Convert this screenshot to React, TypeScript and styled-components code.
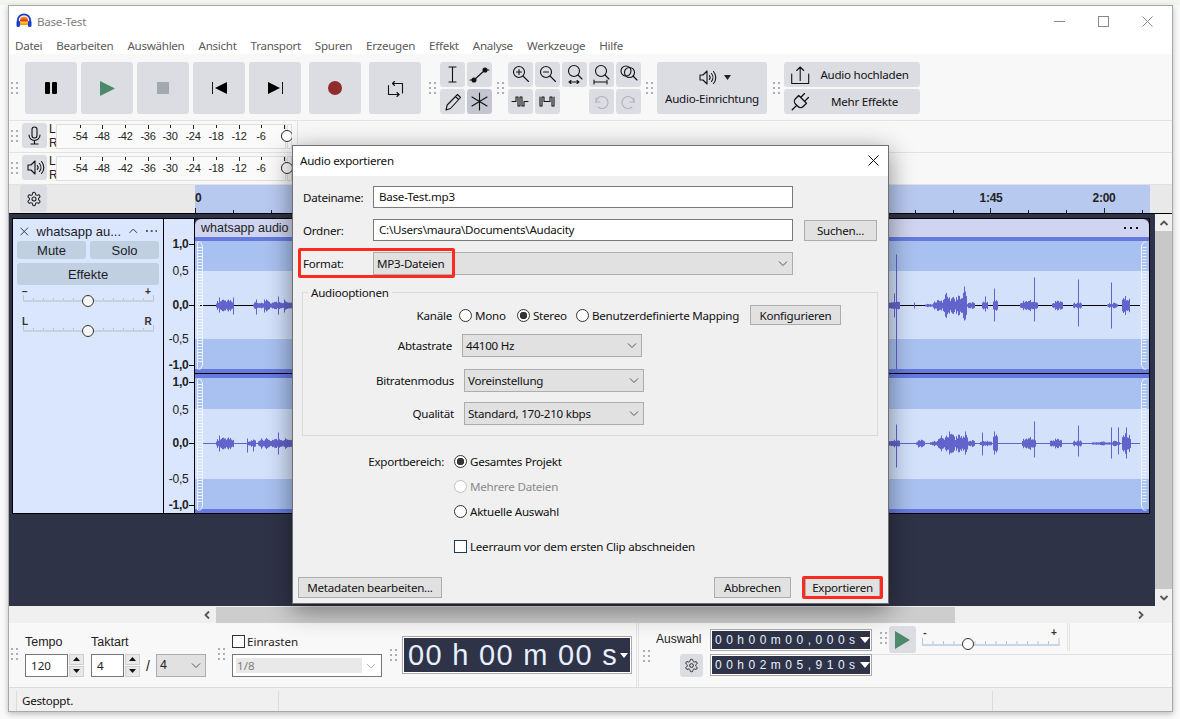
import React from 'react';
import styled, { createGlobalStyle } from 'styled-components';

const UI = `"Noto Sans", sans-serif`;
const AR = `"Liberation Sans", Arial, sans-serif`;

const GlobalStyle = createGlobalStyle`
  html, body { margin: 0; padding: 0; background: #fafafa; }
  * { box-sizing: border-box; }
`;

const Page = styled.div`
  width: 1180px;
  height: 719px;
  padding: 5px 0 0 8px;
  background: linear-gradient(#f3f5ef 5px, #fafafa 5px);
  overflow: hidden;
`;

const Window = styled.div`
  position: relative;
  width: 1165px;
  height: 707px;
  border: 1px solid #a8a8a8;
  background: #f8f8f8;
  box-shadow: 0 2px 6px rgba(0, 0, 0, 0.25);
  display: flex;
  flex-direction: column;
  font-family: ${UI};
  font-size: 11.6px;
  letter-spacing: -0.25px;
  color: #111;
`;

const TitleBar = styled.div`
  height: 30px;
  background: #fff;
  display: flex;
  align-items: center;
  padding: 0 3px 0 7px;
  color: #808080;
  gap: 5px;
`;

const WinControls = styled.div`
  margin-left: auto;
  display: flex;
`;

const WinButton = styled.div`
  width: 44px;
  height: 30px;
  display: flex;
  align-items: center;
  justify-content: center;
`;

const MenuBar = styled.div`
  height: 18px;
  background: #fff;
  display: flex;
  align-items: center;
  gap: 14px;
  padding-left: 6px;
  color: #5a5a5a;
  letter-spacing: -0.28px;
`;

const Dock = styled.div`
  height: 67px;
  display: flex;
  align-items: flex-start;
  padding: 8px 0 0 2px;
  border-bottom: 1px solid #e2e2e2;
`;

const GripMark = styled.svg<{ $l?: number; $r?: number; $t?: number }>`
  flex: none;
  width: 7px;
  height: 12px;
  margin: ${(p) => p.$t ?? 20}px ${(p) => p.$r ?? 4}px 0 ${(p) => p.$l ?? 0}px;
`;

const Grip = (props: { $l?: number; $r?: number; $t?: number }) => (
  <GripMark {...props} viewBox="0 0 7 12">
    {[0, 5, 10].map((y) =>
      [0, 5].map((x) => <rect key={`${x}-${y}`} x={x} y={y} width="2" height="2" fill="#aeaeba" />),
    )}
  </GripMark>
);

const TransportRow = styled.div<{ $l?: number }>`
  display: flex;
  gap: 4px;
  margin-left: ${(p) => p.$l ?? 0}px;
`;

const BigButton = styled.div`
  width: 52px;
  height: 52px;
  background: #dcdde3;
  border-radius: 3px;
  display: flex;
  align-items: center;
  justify-content: center;
`;

const ToolGrid = styled.div<{ $cols: number }>`
  display: grid;
  grid-template-columns: repeat(${(p) => p.$cols}, 25px);
  grid-auto-rows: 25px;
  gap: 2px;
`;

const ToolButton = styled.div<{ $on?: boolean; $blank?: boolean }>`
  border-radius: 3px;
  background: ${(p) => (p.$blank ? 'transparent' : p.$on ? '#c3c6d1' : '#dcdde3')};
  display: flex;
  align-items: center;
  justify-content: center;
`;

const SetupButton = styled.div`
  width: 110px;
  height: 52px;
  background: #dcdde3;
  border-radius: 3px;
  display: flex;
  flex-direction: column;
  align-items: center;
  padding-top: 3px;
  gap: 2px;
`;

const SetupIcon = styled.div`
  display: flex;
  align-items: center;
  gap: 6px;
  height: 24px;
`;

const WideStack = styled.div`
  display: flex;
  flex-direction: column;
  gap: 2px;
`;

const WideButton = styled.div`
  width: 136px;
  height: 25px;
  background: #dcdde3;
  border-radius: 3px;
  display: flex;
  align-items: center;
  padding-left: 5px;
`;

const WideLabel = styled.span`
  flex: 1;
  text-align: center;
  padding-right: 2px;
`;

const MeterRow = styled.div`
  height: 32px;
  display: flex;
  align-items: flex-start;
  padding: 2px 0 0 2px;
  border-bottom: 1px solid #e2e2e2;
`;

const MeterButton = styled.div`
  width: 25px;
  height: 25px;
  background: #dcdde3;
  border-radius: 3px;
  display: flex;
  align-items: center;
  justify-content: center;
`;

const LR = styled.div`
  width: 7px;
  height: 28px;
  margin: -1px 0 0 2px;
  display: flex;
  flex-direction: column;
  justify-content: space-between;
  font: 12px/14px ${AR};
  color: #222;
  letter-spacing: 0;
`;

const MeterSvg = styled.svg`
  flex: none;
  width: 236px;
  height: 26px;
`;

const MeterEnd = styled.div`
  width: 1px;
  height: 31px;
  margin: -2px 0 0 5px;
  background: #e2e2e2;
`;

const TimelineRow = styled.div`
  height: 28px;
  display: flex;
  background: #e9e9ea;
`;

const TimelineLeft = styled.div`
  width: 186px;
  padding-left: 11px;
`;

const GearButton = styled.div<{ $w: number; $h: number }>`
  width: ${(p) => p.$w}px;
  height: ${(p) => p.$h}px;
  background: #dcdde3;
  border-radius: 3px;
  display: flex;
  align-items: center;
  justify-content: center;
`;

const RulerSvg = styled.svg`
  flex: none;
  width: 955px;
  height: 28px;
  background: #b8c9f0;
`;

const TrackArea = styled.div`
  height: 393px;
  background: #2f3347;
  border-top: 1px solid #000;
  display: flex;
`;

const TrackPane = styled.div`
  flex: 1;
  padding: 4px 5px 0 3px;
`;

const Track = styled.div`
  width: 1138px;
  height: 296px;
  border: 1px solid #000;
  display: grid;
  grid-template-columns: 151px 31px 954px;
  background: #000;
`;

const TrackPanel = styled.div`
  background: #dae6fd;
  border-right: 1px solid #000;
  padding: 0 4px;
  font: 13px ${AR};
  letter-spacing: 0;
  color: #1c1c28;
`;

const TrackHead = styled.div`
  height: 22px;
  display: flex;
  align-items: center;
  padding: 2px 2px 0 3px;
  gap: 8px;
`;

const TrackName = styled.span`
  flex: 1;
  white-space: nowrap;
`;

const PanelButtons = styled.div`
  display: grid;
  grid-template-columns: 69px 69px;
  gap: 4px;
`;

const PanelButton = styled.div<{ $wide?: boolean }>`
  grid-column: ${(p) => (p.$wide ? '1 / 3' : 'auto')};
  height: ${(p) => (p.$wide ? 22 : 18)}px;
  background: #c0d0e0;
  border-radius: 3px;
  display: flex;
  align-items: center;
  justify-content: center;
`;

const PanelSliderSvg = styled.svg`
  display: block;
  width: 142px;
  height: 30px;
`;

const VRuler = styled.svg`
  display: block;
  width: 31px;
  height: 294px;
  background: #dae6fd;
`;

const Clip = styled.div`
  position: relative;
  display: flex;
  flex-direction: column;
  background: #2f3347;
  height: 294px;
`;

const ClipHead = styled.div`
  height: 18px;
  background: #cfd5f0;
  border-radius: 6px 6px 0 0;
  display: flex;
  align-items: center;
  justify-content: space-between;
  padding: 0 11px 0 6px;
  font: 12.5px ${AR};
  letter-spacing: 0;
  color: #222;
`;

const BlueBar = styled.div<{ $h: number }>`
  height: ${(p) => p.$h}px;
  background: ${(p) => (p.$h === 1 ? '#000' : '#667ade')};
`;

const Band = styled.div<{ $h: number; $dark?: boolean }>`
  height: ${(p) => p.$h}px;
  background: ${(p) => (p.$dark ? '#a9c1f0' : '#d3e1fb')};
`;

const WaveSvg = styled.svg`
  position: absolute;
  left: 0;
  top: 0;
  width: 954px;
  height: 294px;
`;

const VScroll = styled.div`
  width: 17px;
  background: #c8c8c8;
  display: flex;
  flex-direction: column;
  justify-content: space-between;
`;

const ScrollCap = styled.div`
  height: 17px;
  background: #f0f0f0;
  display: flex;
  align-items: center;
  justify-content: center;
`;

const HScroll = styled.div`
  height: 17px;
  background: #f0f0f0;
  display: flex;
  align-items: center;
`;

const HArrow = styled.div<{ $l: number }>`
  width: 16px;
  margin-left: ${(p) => p.$l}px;
  display: flex;
  justify-content: center;
`;

const HThumb = styled.div`
  width: 739px;
  height: 16px;
  margin-left: 1px;
  background: #cdcdcd;
`;

const BottomBar = styled.div`
  height: 65px;
  display: flex;
  align-items: flex-start;
  padding-left: 2px;
  border-bottom: 1px solid #dcdcdc;
  font: 12.5px ${AR};
  letter-spacing: 0;
  color: #222;
`;

const FieldColumn = styled.div<{ $l?: number }>`
  margin-left: ${(p) => p.$l ?? 0}px;
  padding-top: 11px;
`;

const FieldLabel = styled.div`
  height: 16px;
  line-height: 16px;
  margin-bottom: 4px;
`;

const FieldRow = styled.div`
  display: flex;
  align-items: center;
`;

const NumberBox = styled.div<{ $w: number }>`
  width: ${(p) => p.$w}px;
  height: 23px;
  background: #fff;
  border: 1px solid #777;
  font: 11.6px ${UI};
  line-height: 21px;
  padding-left: 5px;
`;

const Spin = styled.div`
  width: 15px;
  margin-left: 1px;
  display: flex;
  flex-direction: column;
  gap: 1px;
`;

const SpinPart = styled.div`
  height: 11px;
  background: #e8e8e8;
  border: 1px solid #cfcfcf;
  display: flex;
  align-items: center;
  justify-content: center;
`;

const Slash = styled.span`
  width: 16px;
  text-align: center;
  font: 14px ${AR};
`;

const SnapTop = styled.div`
  height: 21px;
  margin-top: -3px;
  display: flex;
  align-items: center;
  gap: 2px;
  font: 11.6px ${UI};
`;

const TickBox = styled.span<{ $border?: string }>`
  flex: none;
  width: 13px;
  height: 13px;
  background: #fff;
  border: 1px solid ${(p) => p.$border ?? '#333'};
`;

const SnapSelect = styled.div`
  width: 150px;
  height: 23px;
  margin-top: 2px;
  background: #fff;
  border: 1px solid #777;
  padding: 3px 19px 3px 3px;
  position: relative;
`;

const SnapValue = styled.div`
  height: 15px;
  background: #e9e9e9;
  color: #808080;
  font: 11.6px/15px ${UI};
  padding-left: 1px;
`;

const ChevronSlot = styled.span`
  position: absolute;
  right: 5px;
  top: 50%;
  margin-top: -5px;
  line-height: 0;
`;

const BigTime = styled.div`
  width: 230px;
  height: 38px;
  margin-top: 13px;
  background: #2f3347;
  border: 1px solid #aaa;
  box-shadow: inset 0 0 0 1px #fff;
  display: flex;
  align-items: center;
  padding-left: 5px;
  font: 29px ${AR};
  letter-spacing: 1.3px;
  color: #e6f0ff;
  white-space: pre;
`;

const TimeArrow = styled.span<{ $s: number }>`
  margin-left: auto;
  margin-right: 3px;
  border-left: ${(p) => p.$s}px solid transparent;
  border-right: ${(p) => p.$s}px solid transparent;
  border-top: ${(p) => p.$s + 1}px solid #fff;
`;

const Separator = styled.div`
  width: 3px;
  height: 64px;
  margin-left: 4px;
  border-left: 1px solid #e2e2e2;
  border-right: 1px solid #e2e2e2;
`;

const SelectionGrid = styled.div`
  display: grid;
  grid-template-columns: 47px 162px;
  column-gap: 7px;
  row-gap: 3px;
  padding-top: 6px;
  margin-left: 6px;
`;

const SelectionLabel = styled.div`
  font: 12px/21px ${AR};
`;

const GearCell = styled.div`
  display: flex;
  justify-content: flex-end;
`;

const SmallTime = styled.div`
  height: 22px;
  background: #2f3347;
  border: 1px solid #aaa;
  box-shadow: inset 0 0 0 1px #fff;
  display: flex;
  align-items: center;
  padding-left: 4px;
  font: 12px ${AR};
  letter-spacing: 4.5px;
  color: #e6f0ff;
`;

const PlayColumn = styled.div`
  flex: 1;
  height: 64px;
  display: flex;
  flex-direction: column;
`;

const PlayRow = styled.div`
  height: 32px;
  border-bottom: 1px solid #e2e2e2;
  display: flex;
  align-items: flex-start;
  padding-top: 3px;
`;

const PlayButton = styled.div`
  width: 27px;
  height: 27px;
  margin-left: 2px;
  background: #dcdde3;
  border-radius: 3px;
  display: flex;
  align-items: center;
  justify-content: center;
`;

const PlaySlider = styled.svg`
  width: 140px;
  height: 26px;
  margin-left: 6px;
`;

const PlayEnd = styled.div`
  width: 3px;
  height: 28px;
  margin-left: 5px;
  margin-top: -3px;
  border-left: 1px solid #e2e2e2;
  border-right: 1px solid #e2e2e2;
`;

const StatusBar = styled.div`
  height: 23px;
  background: #f0f0f0;
  display: flex;
  align-items: center;
  padding-top: 2px;
`;

const StatusCell = styled.div<{ $w: number; $pad?: number }>`
  width: ${(p) => p.$w}px;
  height: 20px;
  line-height: 20px;
  padding-left: ${(p) => p.$pad ?? 0}px;
  border-right: 1px solid #dcdcdc;
`;

const Dialog = styled.div`
  position: absolute;
  left: 283px;
  top: 139px;
  width: 597px;
  height: 459px;
  background: #f0f0f0;
  border: 1px solid #707070;
  box-shadow: 0 6px 24px rgba(0, 0, 0, 0.45);
  color: #111;
  display: flex;
  flex-direction: column;
`;

const DialogTitle = styled.div`
  height: 30px;
  flex: none;
  background: #fff;
  display: flex;
  align-items: center;
  justify-content: space-between;
  padding: 0 9px 2px 7px;
`;

const FormRow = styled.div<{ $t: number }>`
  position: relative;
  display: flex;
  align-items: center;
  margin-top: ${(p) => p.$t}px;
  padding-left: 10px;
`;

const FormLabel = styled.span`
  width: 70px;
`;

const TextInput = styled.div`
  width: 420px;
  height: 22px;
  background: #fff;
  border: 1px solid #7a7a7a;
  line-height: 20px;
  padding-left: 5px;
`;

const Select = styled.div<{ $w: number; $l?: number }>`
  position: relative;
  width: ${(p) => p.$w}px;
  height: 23px;
  margin-left: ${(p) => p.$l ?? 0}px;
  background: #e1e1e1;
  border: 1px solid #adadad;
  line-height: 21px;
  padding-left: 3px;
`;

const PushButton = styled.div<{ $w: number; $l?: number; $h?: number }>`
  flex: none;
  width: ${(p) => p.$w}px;
  height: ${(p) => p.$h ?? 21}px;
  margin-left: ${(p) => p.$l ?? 0}px;
  background: #e1e1e1;
  border: 1px solid #adadad;
  display: flex;
  align-items: center;
  justify-content: center;
`;

const RedBox = styled.div`
  position: absolute;
  left: 5px;
  top: -4px;
  width: 157px;
  height: 30px;
  border: 3px solid #ff2a1f;
  border-radius: 2px;
`;

const RedButtonBox = styled.div`
  position: absolute;
  inset: -1px -3px -1px -3px;
  border: 3px solid #ff2a1f;
  border-radius: 2px;
`;

const GroupBox = styled.div`
  position: relative;
  width: 576px;
  height: 144px;
  margin: 17px 0 0 9px;
  border: 1px solid #dcdcdc;
  padding-top: 12px;
`;

const GroupTitle = styled.span`
  position: absolute;
  left: 5px;
  top: -8px;
  padding: 0 3px;
  background: #f0f0f0;
`;

const OptionRow = styled.div<{ $t?: number }>`
  display: flex;
  align-items: center;
  margin-top: ${(p) => p.$t ?? 0}px;
`;

const OptionLabel = styled.span<{ $w: number }>`
  width: ${(p) => p.$w}px;
  text-align: right;
`;

const RadioItem = styled.div<{ $w?: number; $l?: number; $muted?: boolean }>`
  width: ${(p) => (p.$w ? `${p.$w}px` : 'auto')};
  margin-left: ${(p) => p.$l ?? 0}px;
  display: flex;
  align-items: center;
  gap: 3px;
  white-space: nowrap;
  color: ${(p) => (p.$muted ? '#8a8a8a' : 'inherit')};
`;

const RadioDot = styled.span<{ $on?: boolean; $muted?: boolean }>`
  flex: none;
  width: 13px;
  height: 13px;
  border-radius: 50%;
  border: 1px solid ${(p) => (p.$muted ? '#c0c0c0' : '#333')};
  background: ${(p) => (p.$on ? 'radial-gradient(circle, #333 0 3.5px, #fff 4px)' : '#fff')};
`;

const RangeRow = styled.div<{ $t: number }>`
  display: flex;
  align-items: center;
  height: 16px;
  margin-top: ${(p) => p.$t}px;
`;

const RangeLabel = styled.span`
  width: 151px;
  margin-right: 10px;
  text-align: right;
`;

const RangeSpacer = styled.span`
  width: 161px;
`;

const DialogFooter = styled.div`
  margin-top: 23px;
  padding: 0 8px 0 5px;
  display: flex;
  align-items: center;
`;

const FooterGap = styled.div`
  flex: 1;
`;

const HighlightWrap = styled.div`
  position: relative;
  margin-left: 14px;
`;

const ChevronSvg = styled.svg`
  position: absolute;
  right: 4px;
  top: 7px;
  width: 10px;
  height: 7px;
`;

const ScrollGlyph = styled.svg<{ $turn: number }>`
  width: 10px;
  height: 10px;
  transform: rotate(${(p) => p.$turn}deg);
`;

const Ink = ({ size = 25, children, color = '#111' }: { size?: number; children: React.ReactNode; color?: string }) => (
  <svg width={size} height={size} viewBox={`0 0 ${size} ${size}`} fill="none" stroke={color} strokeWidth="1.1" strokeLinecap="round" strokeLinejoin="round">
    {children}
  </svg>
);

const Chevron = ({ color = '#555' }: { color?: string }) => (
  <ChevronSvg viewBox="0 0 10 7">
    <path d="M1 1.5 5 5.5 9 1.5" fill="none" stroke={color} strokeWidth="1" />
  </ChevronSvg>
);

const Gear = ({ size = 16 }: { size?: number }) => (
  <svg width={size} height={size} viewBox="0 0 24 24" fill="none" stroke="#222" strokeWidth="1.6" strokeLinejoin="round">
    <path d="M12.2 2h-.4a2 2 0 0 0-2 2v.2a2 2 0 0 1-1 1.7l-.4.3a2 2 0 0 1-2 0l-.2-.1a2 2 0 0 0-2.7.7l-.2.4a2 2 0 0 0 .7 2.7l.2.1a2 2 0 0 1 1 1.7v.5a2 2 0 0 1-1 1.8l-.2.1a2 2 0 0 0-.7 2.7l.2.4a2 2 0 0 0 2.7.7l.2-.1a2 2 0 0 1 2 0l.4.3a2 2 0 0 1 1 1.7v.2a2 2 0 0 0 2 2h.4a2 2 0 0 0 2-2v-.2a2 2 0 0 1 1-1.7l.4-.3a2 2 0 0 1 2 0l.2.1a2 2 0 0 0 2.7-.7l.2-.4a2 2 0 0 0-.7-2.7l-.2-.1a2 2 0 0 1-1-1.8v-.5a2 2 0 0 1 1-1.7l.2-.1a2 2 0 0 0 .7-2.7l-.2-.4a2 2 0 0 0-2.7-.7l-.2.1a2 2 0 0 1-2 0l-.4-.3a2 2 0 0 1-1-1.7V4a2 2 0 0 0-2-2z" />
    <circle cx="12" cy="12" r="3" />
  </svg>
);

const Speaker = ({ size = 25 }: { size?: number }) => (
  <Ink size={size}>
    <path d="M6 10h3l4-4v13l-4-4H6z" />
    <path d="M15.3 10.5a3 3 0 0 1 0 4M17.4 8.5a6 6 0 0 1 0 8M19.5 6.5a9 9 0 0 1 0 12" />
  </Ink>
);

const Logo = () => (
  <svg width="16" height="16" viewBox="0 0 16 16">
    <defs>
      <linearGradient id="logoFill" x1="0" y1="0" x2="0" y2="1">
        <stop offset="0" stopColor="#f5a623" />
        <stop offset="0.5" stopColor="#e8321a" />
        <stop offset="0.65" stopColor="#f9d423" />
        <stop offset="1" stopColor="#f08a1d" />
      </linearGradient>
    </defs>
    <path d="M4 12V7.5a4 4 0 0 1 8 0V12z" fill="url(#logoFill)" />
    <path d="M1.8 9V7.5a6.2 6.2 0 0 1 12.4 0V9" fill="none" stroke="#1a3fc4" strokeWidth="1.8" />
    <rect x="0.5" y="7.5" width="3.5" height="6.5" rx="1.6" fill="#1a3fc4" />
    <rect x="12" y="7.5" width="3.5" height="6.5" rx="1.6" fill="#1a3fc4" />
  </svg>
);

const spikeX = [81, 103, 126, 149, 171, 194, 217, 240, 262, 285];
const spikeLabels = ['-54', '-48', '-42', '-36', '-30', '-24', '-18', '-12', '-6', '0'];

const Meter = () => (
  <MeterSvg viewBox="56 122 236 26">
    <rect x="56.5" y="123.5" width="229" height="24" fill="#fafafa" stroke="#dedede" />
    <rect x="287.5" y="123.5" width="4" height="24" fill="#fafafa" stroke="#dedede" />
    {spikeX.map((x, i) => (
      <g key={x}>
        <line x1={x - 0.5} x2={x - 0.5} y1="124" y2={i % 2 ? 128 : 127} stroke="#222" />
        <text x={x - 1} y="139" textAnchor="middle" fontFamily={AR} fontSize="11" fill="#222">
          {spikeLabels[i]}
        </text>
      </g>
    ))}
    <circle cx="287" cy="135" r="5.5" fill="#fff" stroke="#333" />
  </MeterSvg>
);

const rulerLabels: [string, number, boolean][] = [
  ['1,0', 244, true], ['0,5', 271, false], ['0,0', 305, true], ['-0,5', 339, false], ['-1,0', 365, true],
  ['1,0', 382, true], ['0,5', 410, false], ['0,0', 443, true], ['-0,5', 479, false], ['-1,0', 505, true],
];

const rand = (x: number) => Math.abs(Math.sin(x * 12.9898) * 43758.5453) % 1;

type Cluster = [number, number, number];
type Spike = [number, number, number];

// builds one vertical stroke per pixel, in page x and clip-local y
const wavePath = (center: number, clusters: Cluster[], spikes: Spike[]) => {
  let d = '';
  clusters.forEach(([from, to, amp]) => {
    for (let x = from; x < to; x++) {
      const mid = (x - from) / Math.max(1, to - from);
      const a = Math.max(1, amp * (0.45 + 0.55 * rand(x)) * (0.6 + 0.4 * Math.sin(mid * Math.PI)));
      d += `M${x - 194.5} ${center - a}V${center + a}`;
    }
  });
  spikes.forEach(([x, up, down]) => {
    d += `M${x - 194.5} ${center - up}V${center + down}`;
  });
  return d;
};

const topClusters: Cluster[] = [
  [216, 234, 7], [253, 262, 4], [262, 270, 6], [270, 281, 5], [281, 293, 5],
  [888, 900, 5], [925, 933, 2], [933, 943, 6], [943, 950, 14], [950, 955, 10], [955, 962, 11], [962, 967, 18], [967, 975, 4],
  [982, 988, 5], [993, 998, 7], [1020, 1038, 6], [1052, 1063, 5], [1073, 1082, 4], [1107, 1118, 3], [1122, 1130, 10],
];
const topSpikes: Spike[] = [
  [219, 8, 7], [233, 8, 9], [256, 6, 9], [264, 6, 7], [278, 9, 9], [284, 6, 7], [894, 12, 12], [896, 51, 64], [914, 3, 3],
  [964, 19, 15], [985, 9, 6], [994, 17, 16], [1034, 28, 16], [1078, 26, 21], [1111, 23, 23],
];
const lowClusters: Cluster[] = [
  [216, 234, 7], [248, 256, 4], [258, 270, 6], [270, 281, 6], [281, 293, 6],
  [888, 900, 4], [916, 925, 4], [930, 940, 3], [938, 945, 8], [945, 955, 12], [955, 963, 10], [963, 968, 14], [968, 975, 4],
  [980, 992, 3], [993, 998, 12], [1022, 1036, 7], [1050, 1062, 5], [1073, 1082, 4], [1092, 1110, 2], [1110, 1120, 3], [1122, 1131, 11],
];
const lowSpikes: Spike[] = [
  [219, 8, 8], [247, 5, 9], [253, 4, 8], [278, 11, 11], [896, 19, 24], [918, 3, 4], [949, 12, 11], [965, 12, 11], [982, 11, 12],
  [994, 12, 11], [1034, 22, 14], [1078, 18, 13], [1111, 16, 15], [1118, 16, 11], [1126, 16, 15],
];

const handleTicks = (x: number, from: number, to: number) => {
  let d = '';
  for (let y = from; y < to; y += 3) d += `M${x} ${y + 0.5}h4`;
  return d;
};

const Waveform = () => (
  <WaveSvg viewBox="0 0 954 294">
    <path d="M5 86.5H96M693 86.5H945" stroke="#000" strokeWidth="1" />
    <path d="M8 224.5H96M693 224.5H945" stroke="#6363cc" strokeWidth="1" />
    <path d={wavePath(86.5, topClusters, topSpikes)} stroke="#6363cc" strokeWidth="1" fill="none" />
    <path d={wavePath(224.5, lowClusters, lowSpikes)} stroke="#6363cc" strokeWidth="1" fill="none" />
    {[
      [23, 127],
      [160, 131],
    ].map(([y, h]) => (
      <g key={y} fill="none" stroke="#f2f6ff" strokeWidth="1">
        <path d={`M2.5 ${y}h3l2 4v${h - 8}l-2 4h-3z`} opacity="0.9" />
        <path d={`M951.5 ${y}h-3l-2 4v${h - 8}l2 4h3`} opacity="0.9" />
        <path d={handleTicks(3, y + 5, y + h - 6)} opacity="0.9" />
        <path d={handleTicks(947.5, y + 5, y + h - 6)} opacity="0.9" />
      </g>
    ))}
  </WaveSvg>
);

const PanelSlider = ({ left, right }: { left: string; right: string }) => (
  <PanelSliderSvg viewBox="0 0 142 30">
    <text x="8" y="10" textAnchor="middle" fontFamily={AR} fontSize="10" fontWeight="bold" fill="#333">{left}</text>
    <text x="131" y="10" textAnchor="middle" fontFamily={AR} fontSize="10" fontWeight="bold" fill="#333">{right}</text>
    <rect x="6" y="15" width="131" height="2" fill="#c7d2dd" />
    {Array.from({ length: 14 }, (_, i) => (
      <rect key={i} x={6 + i * 10} y={i === 0 || i === 13 ? 10 : 13} width="1" height={i === 0 || i === 13 ? 5 : 2} fill="#b9c4d0" />
    ))}
    <circle cx="71" cy="16" r="5.5" fill="#f7f7f7" stroke="#333" />
  </PanelSliderSvg>
);

const TriUp = () => (
  <svg width="7" height="5" viewBox="0 0 7 5"><path d="M3.5 0 7 4H0z" fill="#111" /></svg>
);
const TriDown = () => (
  <svg width="7" height="5" viewBox="0 0 7 5"><path d="M3.5 4 7 0H0z" fill="#111" /></svg>
);

const ScrollChevron = ({ dir }: { dir: 'up' | 'down' | 'left' | 'right' }) => {
  const turn = { up: 0, right: 90, down: 180, left: 270 }[dir];
  return (
    <ScrollGlyph $turn={turn} viewBox="0 0 10 10">
      <path d="M1.5 7 5 3.5 8.5 7" fill="none" stroke="#555" strokeWidth="1.8" />
    </ScrollGlyph>
  );
};

export default function App() {
  return (
    <>
      <GlobalStyle />
      <Page>
        <Window>
          <TitleBar>
            <Logo />
            <span>Base-Test</span>
            <WinControls>
              <WinButton>
                <svg width="11" height="11" viewBox="0 0 11 11"><path d="M0 5.5h11" stroke="#888" /></svg>
              </WinButton>
              <WinButton>
                <svg width="11" height="11" viewBox="0 0 11 11"><rect x=".5" y=".5" width="10" height="10" fill="none" stroke="#888" /></svg>
              </WinButton>
              <WinButton>
                <svg width="11" height="11" viewBox="0 0 11 11"><path d="M.5.5l10 10M10.5.5l-10 10" stroke="#888" /></svg>
              </WinButton>
            </WinControls>
          </TitleBar>

          <MenuBar>
            {['Datei', 'Bearbeiten', 'Auswählen', 'Ansicht', 'Transport', 'Spuren', 'Erzeugen', 'Effekt', 'Analyse', 'Werkzeuge', 'Hilfe'].map((m) => (
              <span key={m}>{m}</span>
            ))}
          </MenuBar>

          <Dock>
            <Grip $r={7} />
            <TransportRow>
              <BigButton>
                <svg width="12" height="12" viewBox="0 0 12 12"><rect width="5" height="12" rx="1.2" /><rect x="7" width="5" height="12" rx="1.2" /></svg>
              </BigButton>
              <BigButton>
                <svg width="15" height="15" viewBox="0 0 15 15"><path d="M0 0 15 7.5 0 15z" fill="#4d8a6a" /></svg>
              </BigButton>
              <BigButton>
                <svg width="12" height="12" viewBox="0 0 12 12"><rect width="12" height="12" fill="#a3a7ae" /></svg>
              </BigButton>
              <BigButton>
                <svg width="15" height="12" viewBox="0 0 15 12"><path d="M.5 0v12" stroke="#111" /><path d="M15 0v12L3 6z" /></svg>
              </BigButton>
              <BigButton>
                <svg width="15" height="12" viewBox="0 0 15 12"><path d="M14.5 0v12" stroke="#111" /><path d="M0 0v12l12-6z" /></svg>
              </BigButton>
            </TransportRow>
            <TransportRow $l={8}>
              <BigButton>
                <svg width="14" height="14" viewBox="0 0 14 14"><circle cx="7" cy="7" r="7" fill="#8f2d2d" /></svg>
              </BigButton>
            </TransportRow>
            <TransportRow $l={8}>
              <BigButton>
                <Ink>
                  <path d="M9.5 7.5h10v9.5M5.5 9.5v9H16" />
                  <path d="M11.5 5.5l-2 2 2 2M14 16.5l2 2-2 2" />
                </Ink>
              </BigButton>
            </TransportRow>
            <Grip $l={8} />
            <ToolGrid $cols={2}>
              <ToolButton>
                <Ink><path d="M9 5h7M12.5 5v15M9 20h7" /></Ink>
              </ToolButton>
              <ToolButton>
                <Ink>
                  <path d="M7 18 18 8M3 18h4M18 8h4" />
                  <circle cx="7" cy="18" r="2" fill="#111" />
                  <circle cx="18" cy="8" r="2" fill="#111" />
                </Ink>
              </ToolButton>
              <ToolButton>
                <Ink><path d="M6 21l1.2-5L17.5 5.5l3 3L10.5 19.5zM15.5 7.5l3 3" /></Ink>
              </ToolButton>
              <ToolButton $on>
                <Ink><path d="M12.5 4v17M5 8l15 9M20 8 5 17" /></Ink>
              </ToolButton>
            </ToolGrid>
            <Grip $l={5} />
            <ToolGrid $cols={5}>
              <ToolButton>
                <Ink><circle cx="11" cy="10" r="5.5" /><path d="M15 14l5.5 5.5M8.5 10h5M11 7.5v5" /></Ink>
              </ToolButton>
              <ToolButton>
                <Ink><circle cx="11" cy="10" r="5.5" /><path d="M15 14l5.5 5.5M8.5 10h5" /></Ink>
              </ToolButton>
              <ToolButton>
                <Ink><circle cx="12" cy="9" r="5.5" /><path d="M16 13l4 4M7 20h10M9 18.5 7 20l2 1.5M15 18.5l2 1.5-2 1.5" /></Ink>
              </ToolButton>
              <ToolButton>
                <Ink><circle cx="12" cy="9" r="5.5" /><path d="M16 13l4 4M5 20h13M5 18v4M18 18v4" /></Ink>
              </ToolButton>
              <ToolButton>
                <Ink><circle cx="10" cy="9" r="5" /><circle cx="13.5" cy="10.5" r="5" /><path d="M17 14l4 4" /></Ink>
              </ToolButton>
              <ToolButton>
                <Ink><path d="M4 12.5h4V8h2v9h2V8h2v9h2v-4.5h4" /></Ink>
              </ToolButton>
              <ToolButton>
                <Ink><path d="M5 8v9h2V8h2v4.500h6V8h2v9h2V8" /></Ink>
              </ToolButton>
              <ToolButton $blank />
              <ToolButton>
                <Ink color="#b2b3bb"><path d="M7 9v4h4" /><path d="M7 13a6 6 0 1 1 2 5" /></Ink>
              </ToolButton>
              <ToolButton>
                <Ink color="#b2b3bb"><path d="M18 9v4h-4" /><path d="M18 13a6 6 0 1 0-2 5" /></Ink>
              </ToolButton>
            </ToolGrid>
            <Grip $l={5} />
            <SetupButton>
              <SetupIcon>
                <Speaker size={24} />
                <svg width="7" height="5" viewBox="0 0 7 5"><path d="M0 0h7L3.5 5z" fill="#222" /></svg>
              </SetupIcon>
              <span>Audio-Einrichtung</span>
            </SetupButton>
            <Grip $l={6} />
            <WideStack>
              <WideButton>
                <Ink size={22}>
                  <path d="M2.7 10v9.5h17V10M11.2 16.5V3M7.7 6.5 11.2 3l3.5 3.5" />
                </Ink>
                <WideLabel>Audio hochladen</WideLabel>
              </WideButton>
              <WideButton>
                <svg width="22" height="22" viewBox="0 0 24 24" fill="none" stroke="#111" strokeWidth="1.4" strokeLinecap="round" strokeLinejoin="round">
                  <g transform="rotate(45 12 12)">
                    <path d="M12 24v-7M9 8V2M15 8V2M18 8v5a4 4 0 0 1-4 4h-4a4 4 0 0 1-4-4V8Z" />
                  </g>
                </svg>
                <WideLabel>Mehr Effekte</WideLabel>
              </WideButton>
            </WideStack>
          </Dock>

          <MeterRow>
            <Grip $t={7} />
            <MeterButton>
              <Ink>
                <rect x="10" y="4" width="5" height="11" rx="2.5" />
                <path d="M7 12a5.5 5.5 0 0 0 11 0M12.5 18v3M9 21h7" />
              </Ink>
            </MeterButton>
            <LR><span>L</span><span>R</span></LR>
            <Meter />
            <MeterEnd />
          </MeterRow>
          <MeterRow>
            <Grip $t={7} />
            <MeterButton><Speaker /></MeterButton>
            <LR><span>L</span><span>R</span></LR>
            <Meter />
            <MeterEnd />
          </MeterRow>

          <TimelineRow>
            <TimelineLeft>
              <GearButton $w={27} $h={27}><Gear /></GearButton>
            </TimelineLeft>
            <RulerSvg viewBox="0 0 955 28">
              <text x="0" y="17" fontFamily={AR} fontSize="12" fontWeight="bold" fill="#222">0</text>
              <text x="796" y="17" textAnchor="middle" fontFamily={AR} fontSize="12" fontWeight="bold" fill="#222">1:45</text>
              <text x="909" y="17" textAnchor="middle" fontFamily={AR} fontSize="12" fontWeight="bold" fill="#222">2:00</text>
              {Array.from({ length: 26 }, (_, i) => {
                const x = Math.round(i * 37.88) + 0.5;
                return <line key={i} x1={x} x2={x} y1={i % 3 === 0 ? 23 : 25} y2="28" stroke="#222" />;
              })}
            </RulerSvg>
          </TimelineRow>

          <TrackArea>
            <TrackPane>
              <Track>
                <TrackPanel>
                  <TrackHead>
                    <svg width="9" height="9" viewBox="0 0 9 9"><path d="M.5.5l8 8M8.5.5l-8 8" stroke="#333" /></svg>
                    <TrackName>whatsapp au...</TrackName>
                    <svg width="9" height="6" viewBox="0 0 9 6"><path d="M.5 5 4.5 1l4 4" fill="none" stroke="#333" /></svg>
                    <svg width="12" height="3" viewBox="0 0 12 3" fill="#555"><rect width="2" height="2" /><rect x="5" width="2" height="2" /><rect x="10" width="2" height="2" /></svg>
                  </TrackHead>
                  <PanelButtons>
                    <PanelButton>Mute</PanelButton>
                    <PanelButton>Solo</PanelButton>
                    <PanelButton $wide>Effekte</PanelButton>
                  </PanelButtons>
                  <PanelSlider left="−" right="+" />
                  <PanelSlider left="L" right="R" />
                </TrackPanel>
                <VRuler viewBox="164 219 31 294">
                  <line x1="164" x2="195" y1="236.5" y2="236.5" stroke="#e8e8e8" />
                  <line x1="164" x2="195" y1="373.5" y2="373.5" stroke="#e8e8e8" />
                  <rect x="194" y="219" width="1" height="294" fill="#000" />
                  {rulerLabels.map(([t, y, b], i) => (
                    <g key={i}>
                      <text x="188.5" y={y + 4} textAnchor="end" fontFamily={AR} fontSize="12" fontWeight={b ? 'bold' : 'normal'} fill="#222">{t}</text>
                      {b && <line x1="189" x2="195" y1={y + 0.5} y2={y + 0.5} stroke="#000" />}
                    </g>
                  ))}
                </VRuler>
                <Clip>
                  <ClipHead>
                    <span>whatsapp audio</span>
                    <svg width="14" height="3" viewBox="0 0 14 3" fill="#111"><rect width="2" height="2" /><rect x="6" width="2" height="2" /><rect x="12" width="2" height="2" /></svg>
                  </ClipHead>
                  <BlueBar $h={4} />
                  <Band $h={30} $dark /><Band $h={68} /><Band $h={30} $dark />
                  <BlueBar $h={4} />
                  <BlueBar $h={1} />
                  <BlueBar $h={4} />
                  <Band $h={31} $dark /><Band $h={70} /><Band $h={30} $dark />
                  <BlueBar $h={4} />
                  <Waveform />
                </Clip>
              </Track>
            </TrackPane>
            <VScroll>
              <ScrollCap><ScrollChevron dir="up" /></ScrollCap>
              <ScrollCap><ScrollChevron dir="down" /></ScrollCap>
            </VScroll>
          </TrackArea>

          <HScroll>
            <HArrow $l={190}><ScrollChevron dir="left" /></HArrow>
            <HThumb />
            <HArrow $l={178}><ScrollChevron dir="right" /></HArrow>
          </HScroll>

          <BottomBar>
            <Grip $t={25} $r={7} />
            <FieldColumn>
              <FieldLabel>Tempo</FieldLabel>
              <FieldRow>
                <NumberBox $w={43}>120</NumberBox>
                <Spin>
                  <SpinPart><TriUp /></SpinPart>
                  <SpinPart><TriDown /></SpinPart>
                </Spin>
              </FieldRow>
            </FieldColumn>
            <FieldColumn $l={7}>
              <FieldLabel>Taktart</FieldLabel>
              <FieldRow>
                <NumberBox $w={33}>4</NumberBox>
                <Spin>
                  <SpinPart><TriUp /></SpinPart>
                  <SpinPart><TriDown /></SpinPart>
                </Spin>
                <Slash>/</Slash>
                <Select $w={50}>4<Chevron /></Select>
              </FieldRow>
            </FieldColumn>
            <Grip $l={12} $t={25} $r={7} />
            <FieldColumn>
              <SnapTop>
                <TickBox />
                Einrasten
              </SnapTop>
              <SnapSelect>
                <SnapValue>1/8</SnapValue>
                <ChevronSlot><svg width="10" height="10" viewBox="0 0 10 10"><path d="M1 3 5 7l4-4" fill="none" stroke="#b5b5b5" /></svg></ChevronSlot>
              </SnapSelect>
            </FieldColumn>
            <Grip $l={8} $t={26} $r={5} />
            <BigTime>
              00 h 00 m 00 s
              <TimeArrow $s={4} />
            </BigTime>
            <Separator />
            <Grip $l={4} $t={27} $r={0} />
            <SelectionGrid>
              <SelectionLabel>Auswahl</SelectionLabel>
              <SmallTime>00h00m00,000s<TimeArrow $s={5} /></SmallTime>
              <GearCell>
                <GearButton $w={23} $h={23}><Gear size={15} /></GearButton>
              </GearCell>
              <SmallTime>00h02m05,910s<TimeArrow $s={5} /></SmallTime>
            </SelectionGrid>
            <PlayColumn>
              <PlayRow>
                <Grip $l={8} $t={6} $r={0} />
                <PlayButton>
                  <svg width="15" height="18" viewBox="0 0 15 18"><path d="M0 0 15 9 0 18z" fill="#4d8a6a" /></svg>
                </PlayButton>
                <PlaySlider viewBox="0 0 140 26">
                  <text x="3" y="10" textAnchor="middle" fontFamily={AR} fontSize="10" fontWeight="bold" fill="#333">-</text>
                  <text x="132" y="10" textAnchor="middle" fontFamily={AR} fontSize="10" fontWeight="bold" fill="#333">+</text>
                  <rect x="0" y="18" width="138" height="2" fill="#c7d6e6" />
                  {Array.from({ length: 14 }, (_, i) => (
                    <rect key={i} x={i * 10.5} y={i === 0 || i === 13 ? 12 : 15} width="1" height={i === 0 || i === 13 ? 6 : 3} fill="#b9c4d0" />
                  ))}
                  <circle cx="46" cy="18" r="5.5" fill="#fff" stroke="#333" />
                </PlaySlider>
                <PlayEnd />
              </PlayRow>
            </PlayColumn>
          </BottomBar>

          <StatusBar>
            <StatusCell $w={8} />
            <StatusCell $w={262} $pad={5}>Gestoppt.</StatusCell>
            <StatusCell $w={714} />
          </StatusBar>

          <Dialog>
            <DialogTitle>
              <span>Audio exportieren</span>
              <svg width="11" height="11" viewBox="0 0 11 11"><path d="M.5.5l10 10M10.5.5l-10 10" stroke="#111" /></svg>
            </DialogTitle>
            <FormRow $t={10}>
              <FormLabel>Dateiname:</FormLabel>
              <TextInput>Base-Test.mp3</TextInput>
            </FormRow>
            <FormRow $t={11}>
              <FormLabel>Ordner:</FormLabel>
              <TextInput>C:\Users\maura\Documents\Audacity</TextInput>
              <PushButton $w={73} $l={11}>Suchen...</PushButton>
            </FormRow>
            <FormRow $t={11}>
              <FormLabel>Format:</FormLabel>
              <Select $w={420}>MP3-Dateien<Chevron /></Select>
              <RedBox />
            </FormRow>
            <GroupBox>
              <GroupTitle>Audiooptionen</GroupTitle>
              <OptionRow>
                <OptionLabel $w={149}>Kanäle</OptionLabel>
                <RadioItem $w={58} $l={7}><RadioDot />Mono</RadioItem>
                <RadioItem $w={59}><RadioDot $on />Stereo</RadioItem>
                <RadioItem $w={174}><RadioDot />Benutzerdefinierte Mapping</RadioItem>
                <PushButton $w={91} $h={20}>Konfigurieren</PushButton>
              </OptionRow>
              <OptionRow $t={9}>
                <OptionLabel $w={149}>Abtastrate</OptionLabel>
                <Select $w={180} $l={10}>44100 Hz<Chevron /></Select>
              </OptionRow>
              <OptionRow $t={12}>
                <OptionLabel $w={151}>Bitratenmodus</OptionLabel>
                <Select $w={180} $l={10}>Voreinstellung<Chevron /></Select>
              </OptionRow>
              <OptionRow $t={10}>
                <OptionLabel $w={151}>Qualität</OptionLabel>
                <Select $w={180} $l={10}>Standard, 170-210 kbps<Chevron /></Select>
              </OptionRow>
            </GroupBox>
            <RangeRow $t={17}>
              <RangeLabel>Exportbereich:</RangeLabel>
              <RadioItem><RadioDot $on />Gesamtes Projekt</RadioItem>
            </RangeRow>
            <RangeRow $t={9}>
              <RangeSpacer />
              <RadioItem $muted><RadioDot $muted />Mehrere Dateien</RadioItem>
            </RangeRow>
            <RangeRow $t={9}>
              <RangeSpacer />
              <RadioItem><RadioDot />Aktuelle Auswahl</RadioItem>
            </RangeRow>
            <RangeRow $t={19}>
              <RangeSpacer />
              <RadioItem><TickBox $border="#1f3a52" />Leerraum vor dem ersten Clip abschneiden</RadioItem>
            </RangeRow>
            <DialogFooter>
              <PushButton $w={144}>Metadaten bearbeiten...</PushButton>
              <FooterGap />
              <PushButton $w={77}>Abbrechen</PushButton>
              <HighlightWrap>
                <PushButton $w={75}>Exportieren</PushButton>
                <RedButtonBox />
              </HighlightWrap>
            </DialogFooter>
          </Dialog>
        </Window>
      </Page>
    </>
  );
}
